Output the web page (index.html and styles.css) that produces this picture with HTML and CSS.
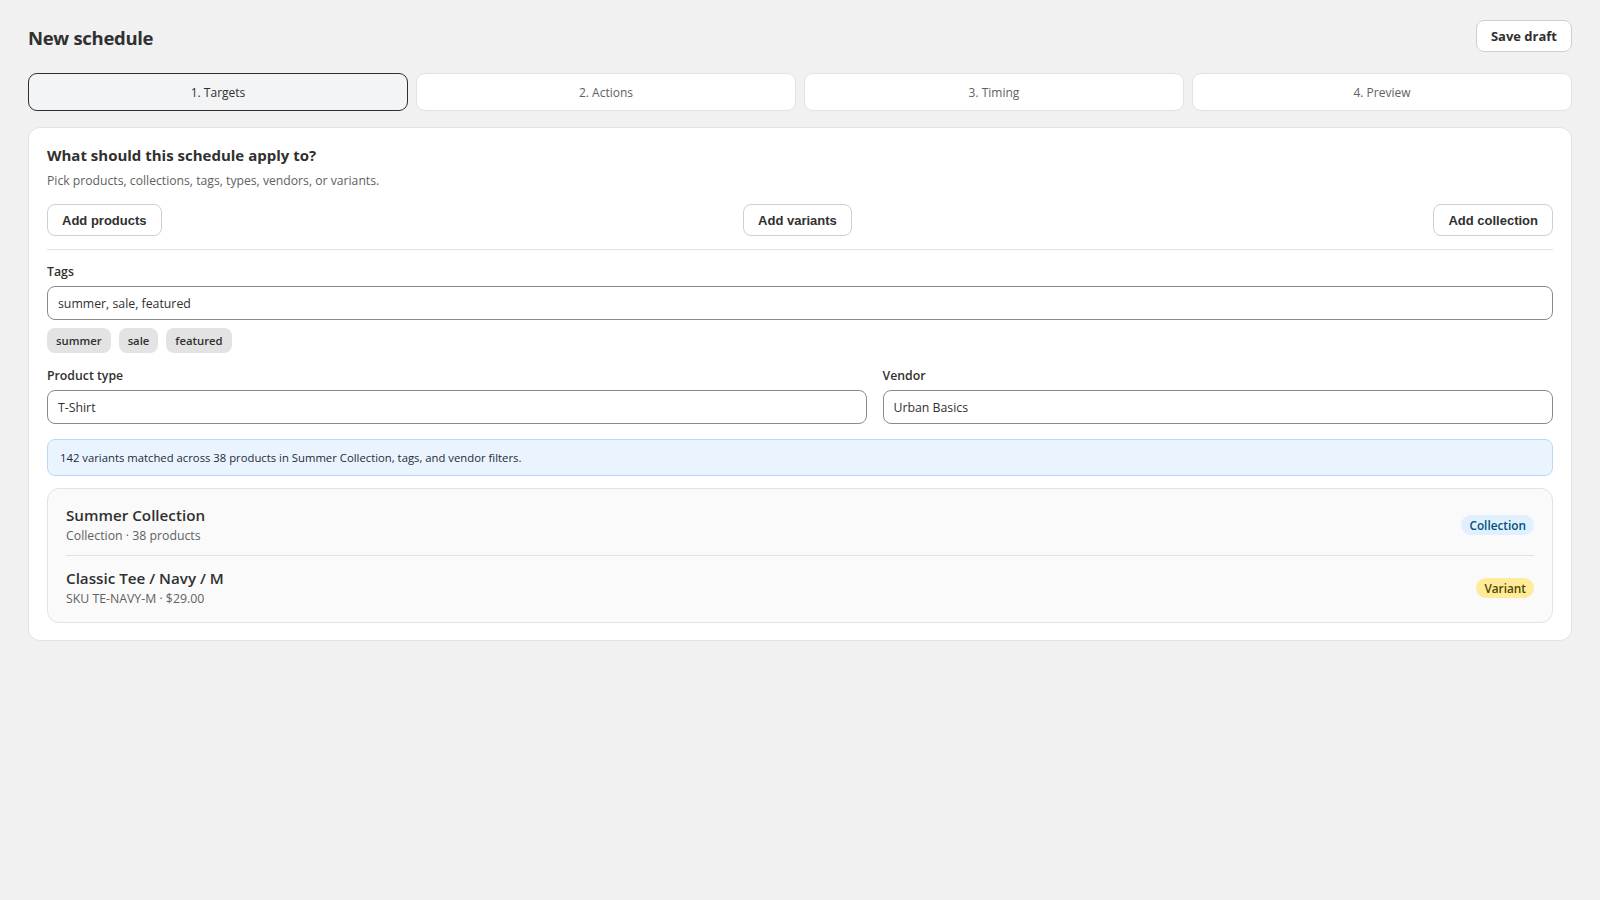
FILE: index.html
```html
<!DOCTYPE html>
<html lang="en">
<head>
    <meta charset="UTF-8">
    <meta name="viewport" content="width=device-width, initial-scale=1.0">
    <title>New schedule</title>
    <link rel="stylesheet" href="styles.css">
</head>
<body>
    <div class="page">
        <!-- header -->
        <div class="page-header">
            <h1>New schedule</h1>
            <button class="btn-save">Save draft</button>
        </div>

        <!-- steps -->
        <div class="steps">
            <button class="step active">1. Targets</button>
            <button class="step">2. Actions</button>
            <button class="step">3. Timing</button>
            <button class="step">4. Preview</button>
        </div>

        <!-- targets card -->
        <div class="card">
            <h2>What should this schedule apply to?</h2>
            <p class="subtitle">Pick products, collections, tags, types, vendors, or variants.</p>

            <div class="pickers">
                <button class="btn-add">Add products</button>
                <button class="btn-add">Add variants</button>
                <button class="btn-add">Add collection</button>
            </div>

            <hr class="divider">

            <label class="field-label">Tags</label>
            <input class="field" type="text" value="summer, sale, featured">
            <div class="chips">
                <span class="chip">summer</span>
                <span class="chip">sale</span>
                <span class="chip">featured</span>
            </div>

            <div class="field-row">
                <div>
                    <label class="field-label">Product type</label>
                    <input class="field" type="text" value="T-Shirt">
                </div>
                <div>
                    <label class="field-label">Vendor</label>
                    <input class="field" type="text" value="Urban Basics">
                </div>
            </div>

            <div class="banner">142 variants matched across 38 products in Summer Collection, tags, and vendor filters.</div>

            <div class="target-list">
                <div class="target">
                    <div>
                        <div class="target-title">Summer Collection</div>
                        <div class="target-meta">Collection · 38 products</div>
                    </div>
                    <span class="badge badge-collection">Collection</span>
                </div>
                <div class="target">
                    <div>
                        <div class="target-title">Classic Tee / Navy / M</div>
                        <div class="target-meta">SKU TE-NAVY-M · $29.00</div>
                    </div>
                    <span class="badge badge-variant">Variant</span>
                </div>
            </div>
        </div>
    </div>
</body>
</html>
```

FILE: styles.css
```css
body {
    margin: 0;
    font-family: "Open Sans", "Noto Sans", sans-serif;
    background-color: #f1f1f1;
    color: #303030;
}

.page {
    padding: 20px 28px;
}

/* header */
.page-header {
    display: flex;
    justify-content: space-between;
    align-items: center;
    height: 32px;
    margin-bottom: 21px;
}

.page-header h1 {
    margin: 2px 0 0 0;
    font-size: 18.5px;
    font-weight: 700;
    letter-spacing: -0.3px;
}

.btn-save {
    height: 32px;
    padding: 0 14px;
    background: white;
    border: 1px solid #d0d0d0;
    border-radius: 8px;
    font-family: inherit;
    font-size: 13px;
    font-weight: 700;
    color: #303030;
}

/* steps */
.steps {
    display: grid;
    grid-template-columns: repeat(4, 1fr);
    gap: 8px;
    margin-bottom: 16px;
}

.step {
    height: 38px;
    padding-top: 2px;
    background: white;
    border: 1px solid #e3e3e3;
    border-radius: 9px;
    font-family: inherit;
    font-size: 12px;
    font-weight: 500;
    color: #616161;
}

.step.active {
    background: #f3f4f6;
    border-color: #303030;
    color: #303030;
}

/* card */
.card {
    background: white;
    border: 1px solid #e3e3e3;
    border-radius: 12px;
    padding: 18px 18px 17px;
}

.card h2 {
    margin: 0;
    font-size: 15px;
    line-height: 18px;
    font-weight: 700;
}

.subtitle {
    margin: 8px 0 0 0;
    font-size: 12.2px;
    line-height: 18px;
    color: #616161;
}

.pickers {
    display: flex;
    justify-content: space-between;
    margin-top: 14px;
}

.btn-add {
    height: 32px;
    padding: 0 14px;
    background: white;
    border: 1px solid #cfcfcf;
    border-radius: 8px;
    font-family: "Liberation Sans", Arial, sans-serif;
    font-size: 13px;
    font-weight: 700;
    color: #303030;
}

.divider {
    border: none;
    border-top: 1px solid #e3e3e3;
    margin: 13px 0 13px 0;
}

.field-label {
    display: block;
    font-size: 12.3px;
    line-height: 18px;
    font-weight: 600;
    margin-bottom: 5px;
}

.field {
    display: block;
    box-sizing: border-box;
    width: 100%;
    height: 34px;
    padding: 0 10px;
    border: 1px solid #8a8a8a;
    border-radius: 8px;
    font-family: inherit;
    font-size: 12.3px;
    color: #303030;
    outline: none;
}

.chips {
    display: flex;
    gap: 8px;
    margin-top: 8px;
}

.chip {
    background: #e3e3e3;
    border-radius: 8px;
    padding: 0 9px;
    height: 25px;
    line-height: 25px;
    font-size: 11.3px;
    font-weight: 600;
}

.field-row {
    display: grid;
    grid-template-columns: 11fr 9fr;
    gap: 16px;
    margin-top: 14px;
}

.banner {
    margin-top: 15px;
    background: #eaf4ff;
    border: 1px solid #b8d9fb;
    border-radius: 8px;
    padding: 0 12px;
    height: 35px;
    line-height: 35px;
    font-size: 11.3px;
    color: #1f2a37;
}

/* matched targets */
.target-list {
    margin-top: 12px;
    background: #fafafa;
    border: 1px solid #e3e3e3;
    border-radius: 12px;
    padding: 4px 18px;
}

.target {
    display: flex;
    justify-content: space-between;
    align-items: center;
    padding: 12px 0 10px;
}

.target + .target {
    border-top: 1px solid #e3e3e3;
}

.target-title {
    font-size: 15.2px;
    line-height: 20px;
    font-weight: 600;
}

.target-meta {
    margin-top: 2px;
    font-size: 12.3px;
    line-height: 18px;
    color: #616161;
}

.badge {
    font-size: 11.8px;
    font-weight: 600;
    padding: 0 8px;
    height: 20px;
    line-height: 20px;
    border-radius: 10px;
}

.badge-collection {
    background: #e0f0ff;
    color: #00527c;
}

.badge-variant {
    background: #ffeb99;
    color: #4f4700;
}
```
